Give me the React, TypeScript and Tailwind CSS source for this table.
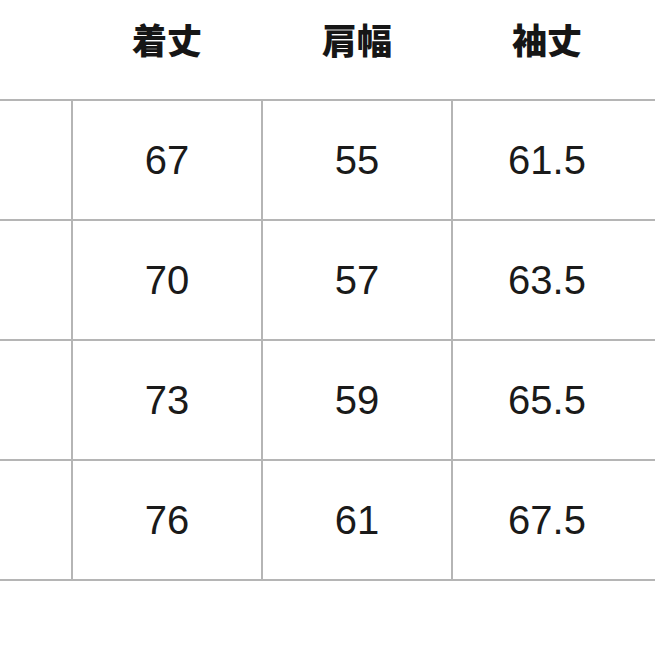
import React from "react";

const rows = [
  ["67", "55", "61.5"],
  ["70", "57", "63.5"],
  ["73", "59", "65.5"],
  ["76", "61", "67.5"],
];

const headers = ["着丈", "肩幅", "袖丈"];

export default function App() {
  return (
    <div className="w-[655px] h-[655px] bg-white overflow-hidden">
      <div className="grid grid-cols-[71px_190px_190px_190px_1fr] h-[99px]">
        <div />
        {headers.map((h) => (
          <div
            key={h}
            className="flex items-center justify-center pb-[20px] pl-[2px] text-[35px] font-black text-[#161616] [font-family:'Noto_Sans_CJK_JP','Noto_Sans_CJK_SC',sans-serif]"
          >
            {h}
          </div>
        ))}
        <div />
      </div>
      <div className="h-[2px] bg-[#b5b5b5]" />
      {rows.map((r, i) => (
        <div
          key={i}
          className="grid grid-cols-[71px_190px_190px_190px_1fr] h-[120px] border-b-2 border-[#b5b5b5]"
        >
          <div />
          {r.map((v, j) => (
            <div
              key={j}
              className="flex items-center justify-center border-l-2 border-[#b5b5b5] text-[40px] text-[#1a1a1a] [font-family:'Liberation_Sans',Arial,sans-serif]"
            >
              {v}
            </div>
          ))}
          <div />
        </div>
      ))}
    </div>
  );
}
